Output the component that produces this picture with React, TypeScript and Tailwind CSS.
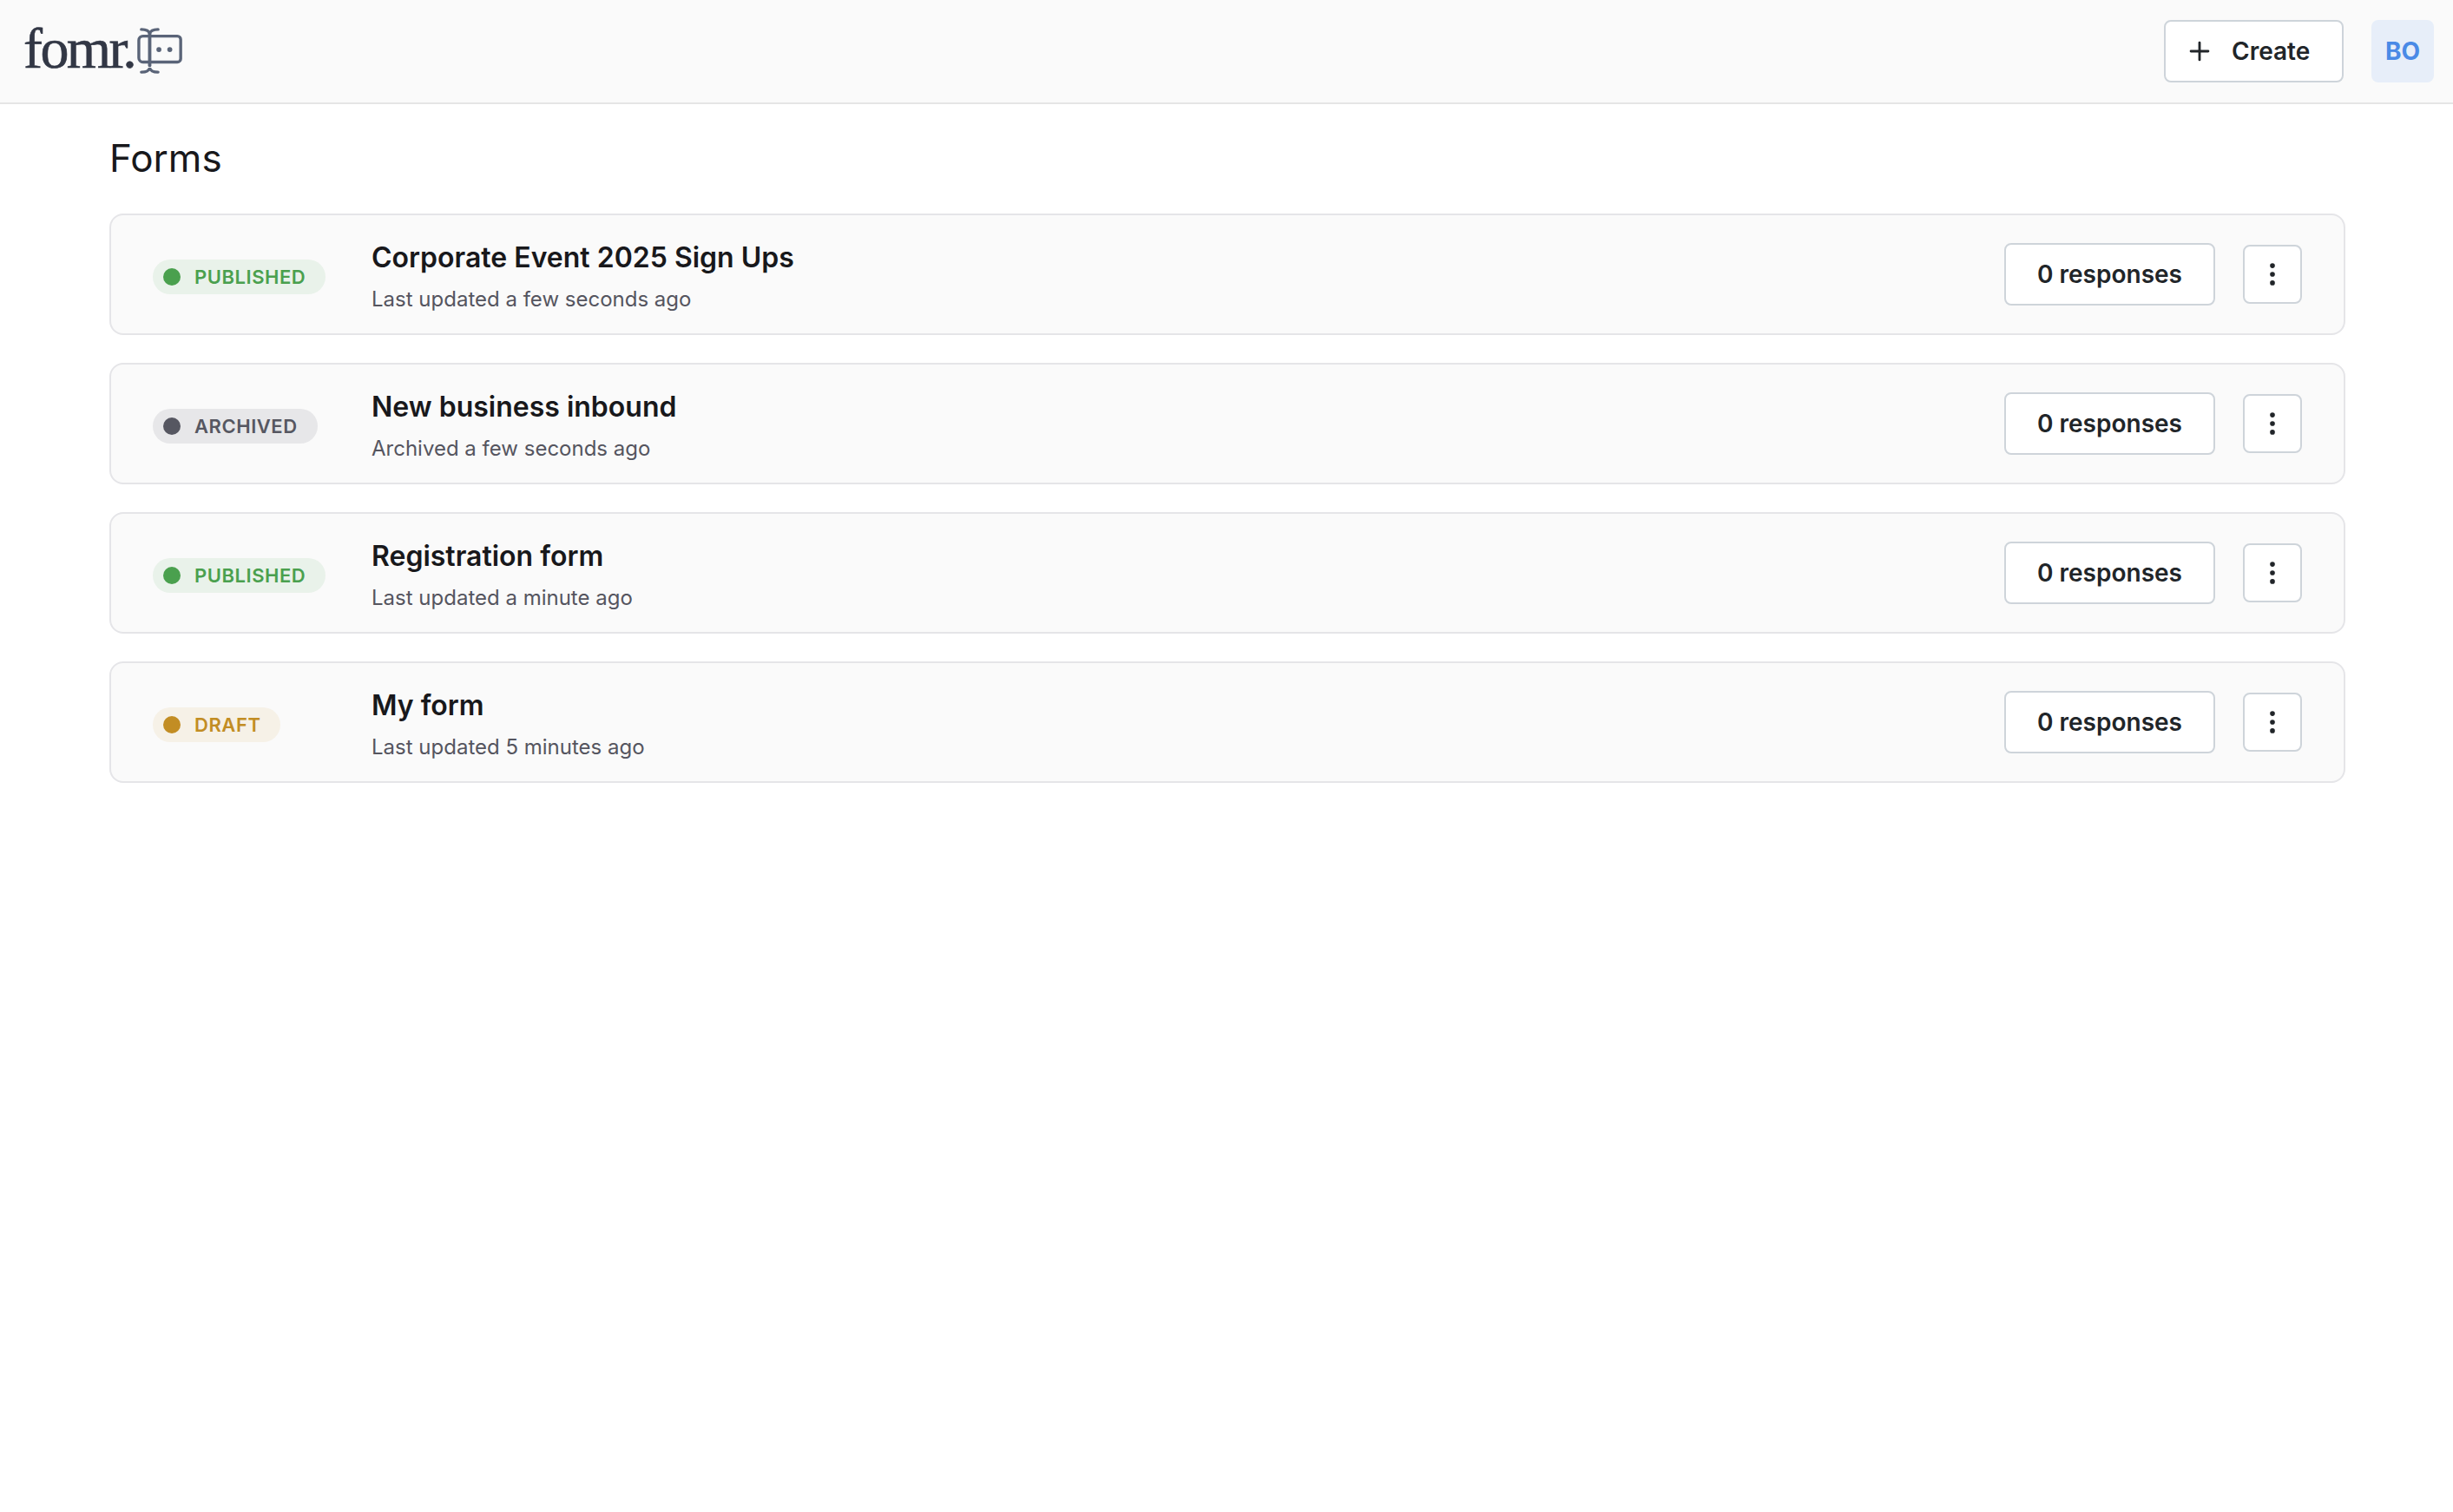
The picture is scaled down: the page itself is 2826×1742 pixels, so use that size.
import { EllipsisVertical, Plus } from "lucide-react";

const forms = [
  { title: "Corporate Event 2025 Sign Ups", sub: "Last updated a few seconds ago", status: "published" },
  { title: "New business inbound", sub: "Archived a few seconds ago", status: "archived" },
  { title: "Registration form", sub: "Last updated a minute ago", status: "published" },
  { title: "My form", sub: "Last updated 5 minutes ago", status: "draft" },
];

const badges: Record<string, { label: string; pill: string; dot: string }> = {
  published: { label: "PUBLISHED", pill: "bg-[#e9f2ea] text-[#4aa04e]", dot: "bg-[#4aa04e]" },
  archived: { label: "ARCHIVED", pill: "bg-[#e7e7e9] text-[#565761]", dot: "bg-[#565761]" },
  draft: { label: "DRAFT", pill: "bg-[#f6f1e7] text-[#c28d24]", dot: "bg-[#c28d24]" },
};

function Logo() {
  return (
    <div className="flex items-start pb-[6px]">
      <span className="font-['Liberation_Serif',serif] text-[66px] leading-[70px] tracking-[-2.6px] text-[#323745] [-webkit-text-stroke:0.6px_#323745]">
        fomr.
      </span>
      <svg width="54" height="54" viewBox="0 0 56 56" fill="none" stroke="#5a6478" strokeWidth="3.5" strokeLinecap="round" className="mt-[11px] ml-[3px]">
        <path d="M14 10H7a5 5 0 0 0-5 5v21a5 5 0 0 0 5 5h7" />
        <path d="M17 10h31a4 4 0 0 1 4 4v23a4 4 0 0 1-4 4H17" />
        <path d="M15 7v38" strokeWidth="4" />
        <path d="M5 2c5 0 9 1 10 5c1-4 5-5 10-5" />
        <path d="M5 53c5 0 9-1 10-5c1 4 5 5 10 5" />
        <circle cx="26" cy="26" r="3" fill="#5a6478" stroke="none" />
        <circle cx="39" cy="26" r="3" fill="#5a6478" stroke="none" />
      </svg>
    </div>
  );
}

function FormRow({ title, sub, status }: { title: string; sub: string; status: string }) {
  const badge = badges[status];
  return (
    <div className="flex h-[140px] items-center rounded-2xl border-2 border-[#e5e5e8] bg-[#fafafa] pl-[48px] pr-[48px]">
      <div className="w-[252px] shrink-0 pt-[6px]">
        <span className={`inline-flex h-10 items-center gap-[16px] rounded-full pl-3 pr-[23px] text-[22px] font-semibold tracking-[0.55px] ${badge.pill}`}>
          <span className={`h-5 w-5 rounded-full ${badge.dot}`} />
          {badge.label}
        </span>
      </div>
      <div className="min-w-0 flex-1 pt-[5px]">
        <div className="text-[32px] font-semibold leading-10 text-[#18181b]">{title}</div>
        <div className="mt-3 text-2xl leading-8 text-[#55555f]">{sub}</div>
      </div>
      <button className="flex h-[72px] w-[243px] items-center justify-center rounded-lg border-2 border-[#ced4da] bg-white text-[28px] font-semibold text-[#212529]">
        0 responses
      </button>
      <button className="ml-8 flex h-[68px] w-[68px] items-center justify-center rounded-lg border-2 border-[#ced4da] bg-white text-[#212529]">
        <EllipsisVertical size={34} strokeWidth={2} />
      </button>
    </div>
  );
}

export default function App() {
  return (
    <div className="min-h-[1742px] bg-white font-['Inter',sans-serif]">
      <header className="flex h-[120px] items-center justify-between border-b-2 border-[#e5e5e5] bg-[#fafafa] pl-[27px] pr-[22px]">
        <Logo />
        <div className="flex items-center gap-8">
          <button className="flex h-[72px] w-[207px] items-center gap-[20px] rounded-lg border-2 border-[#ced4da] bg-white pl-[22px] text-[28px] font-semibold text-[#212529]">
            <Plus size={34} strokeWidth={2} />
            Create
          </button>
          <div className="flex h-[72px] w-[72px] items-center justify-center rounded-lg bg-[#e7eef9] text-[28px] font-bold text-[#4a8ae6]">
            BO
          </div>
        </div>
      </header>
      <main className="pl-[126px] pr-[124px]">
        <h1 className="pt-[34px] pb-[36px] text-[44px] font-normal leading-[56px] text-[#18181b]">Forms</h1>
        <div className="flex flex-col gap-8">
          {forms.map((f) => (
            <FormRow key={f.title} {...f} />
          ))}
        </div>
      </main>
    </div>
  );
}
